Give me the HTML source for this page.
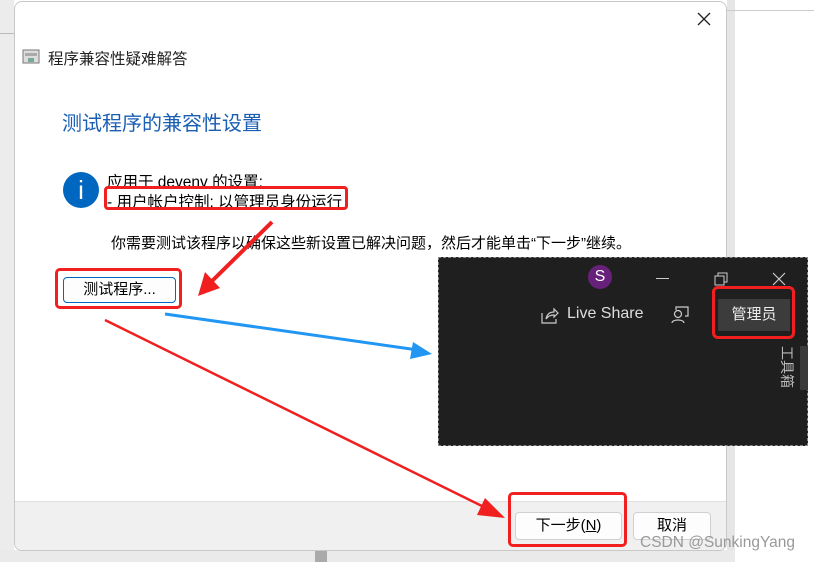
<!DOCTYPE html>
<html><head><meta charset="utf-8"><style>
*{margin:0;padding:0;box-sizing:border-box}
body{width:814px;height:562px;background:#fff;position:relative;overflow:hidden;font-family:"Liberation Sans","Microsoft YaHei","Noto Sans CJK SC",sans-serif;color:#000}
.abs{position:absolute}
.t{font-size:15px;white-space:nowrap}
</style></head><body>
<div class="abs" style="left:0;top:0;width:14px;height:562px;background:#ececec"></div>
<div class="abs" style="left:0;top:33px;width:14px;height:1px;background:#bbb"></div>
<div class="abs" style="left:727px;top:0;width:8px;height:552px;background:#e6e6e6"></div>
<div class="abs" style="left:727px;top:10px;width:87px;height:1px;background:#ccc"></div>
<div class="abs" style="left:0;top:550px;width:735px;height:12px;background:#eaeaea"></div>
<div class="abs" style="left:315px;top:550px;width:12px;height:12px;background:#aaa"></div>
<div class="abs" style="left:14px;top:1px;width:713px;height:550px;background:#fff;border:1px solid #c8c8c8;border-radius:8px;overflow:hidden">
  <div class="abs" style="left:0;top:499px;width:713px;height:51px;background:#f0f0f0;border-top:1px solid #e0e0e0"></div>
</div>
<svg class="abs" style="left:697px;top:12px" width="14" height="14"><path d="M1 1L13 13M13 1L1 13" stroke="#222" stroke-width="1.3"/></svg>
<svg class="abs" style="left:22px;top:49px" width="19" height="16"><rect x="1" y="1" width="16" height="13" fill="#ddd" stroke="#777"/><rect x="3" y="4" width="12" height="3" fill="#aaa"/><rect x="6" y="9" width="6" height="4" fill="#7a9"/></svg>
<div class="abs" style="left:48px;top:47px;font-size:15.5px;color:#222;white-space:nowrap">程序兼容性疑难解答</div>
<div class="abs" style="left:62px;top:107px;font-size:20px;color:#1a5fb4;white-space:nowrap">测试程序的兼容性设置</div>
<div class="abs" style="left:63px;top:172px;width:36px;height:36px;border-radius:50%;background:#0067c0;color:#fff;font-size:26px;text-align:center;line-height:36px">i</div>
<div class="abs t" style="left:107px;top:170px;font-size:15.5px">应用于 devenv 的设置:</div>
<div class="abs t" style="left:107px;top:190px;font-size:15.5px">- 用户帐户控制: 以管理员身份运行</div>
<div class="abs" style="left:104px;top:186px;width:244px;height:24px;border:3px solid #f02020;border-radius:4px"></div>
<div class="abs t" style="left:111px;top:232px;font-size:15px">你需要测试该程序以确保这些新设置已解决问题，然后才能单击“下一步”继续。</div>
<div class="abs" style="left:55px;top:268px;width:127px;height:41px;border:3px solid #f02020;border-radius:5px"></div>
<div class="abs t" style="left:63px;top:277px;width:113px;height:26px;border:1px solid #0067c0;border-radius:4px;background:#fdfdfd;text-align:center;line-height:24px">测试程序...</div>
<div class="abs" style="left:508px;top:492px;width:119px;height:55px;border:3px solid #f02020;border-radius:5px"></div>
<div class="abs t" style="left:515px;top:512px;width:107px;height:28px;border:1px solid #d0d0d0;border-radius:4px;background:#fdfdfd;text-align:center;line-height:26px">下一步(<u>N</u>)</div>
<div class="abs t" style="left:633px;top:512px;width:78px;height:28px;border:1px solid #d0d0d0;border-radius:4px;background:#fdfdfd;text-align:center;line-height:26px">取消</div>
<div class="abs" style="left:640px;top:534px;font-size:15.5px;color:#999;white-space:nowrap">CSDN @SunkingYang</div>
<div class="abs" style="left:438px;top:257px;width:370px;height:189px;background:#1f1f1f;border:1px dashed #888"></div>
<div class="abs" style="left:588px;top:265px;width:24px;height:24px;border-radius:50%;background:#68217a;color:#fff;font-size:16px;text-align:center;line-height:24px">S</div>
<div class="abs" style="left:656px;top:278px;width:13px;height:1px;background:#ccc"></div>
<svg class="abs" style="left:714px;top:272px" width="14" height="14"><rect x="1" y="4" width="9" height="9" fill="none" stroke="#ccc"/><path d="M4 4V1H13V10H10" fill="none" stroke="#ccc"/></svg>
<svg class="abs" style="left:772px;top:272px" width="14" height="14"><path d="M1 1L13 13M13 1L1 13" stroke="#ccc" stroke-width="1.2"/></svg>
<svg class="abs" style="left:541px;top:307px" width="18" height="17"><path d="M1 6V16H15V12M5 12C6 7 9 5 13 5V2L17 6L13 10V8C10 8 7 9 5 12Z" fill="none" stroke="#ccc" stroke-width="1.2"/></svg>
<div class="abs" style="left:567px;top:305px;color:#ddd;font-size:16px;white-space:nowrap">Live Share</div>
<svg class="abs" style="left:670px;top:305px" width="20" height="20"><circle cx="8" cy="9" r="3.5" fill="none" stroke="#ccc" stroke-width="1.2"/><path d="M2 18C2 14 14 14 14 18M6 5V2H18V11H15" fill="none" stroke="#ccc" stroke-width="1.2"/></svg>
<div class="abs" style="left:712px;top:286px;width:83px;height:53px;border:3px solid #f02020;border-radius:6px"></div>
<div class="abs" style="left:718px;top:299px;width:72px;height:32px;background:#3c3c3c;color:#eee;font-size:15px;text-align:center;line-height:32px">管理员</div>
<div class="abs" style="left:777px;top:346px;color:#bbb;font-size:14px;writing-mode:vertical-rl;text-orientation:sideways;white-space:nowrap">工具箱</div>
<div class="abs" style="left:800px;top:346px;width:8px;height:44px;background:#3a3a3a"></div>
<svg class="abs" style="left:0;top:0" width="814" height="562">
<path d="M272 222L210 283" stroke="#f02020" stroke-width="4"/>
<path d="M198 296L205 272L220 288Z" fill="#f02020"/>
<path d="M165 314L418 350" stroke="#2196f3" stroke-width="3"/>
<path d="M432 354L413 342L410 359Z" fill="#2196f3"/>
<path d="M105 320L490 510" stroke="#f02020" stroke-width="2.5"/>
<path d="M505 518L485 498L477 515Z" fill="#f02020"/>
</svg>
</body></html>
